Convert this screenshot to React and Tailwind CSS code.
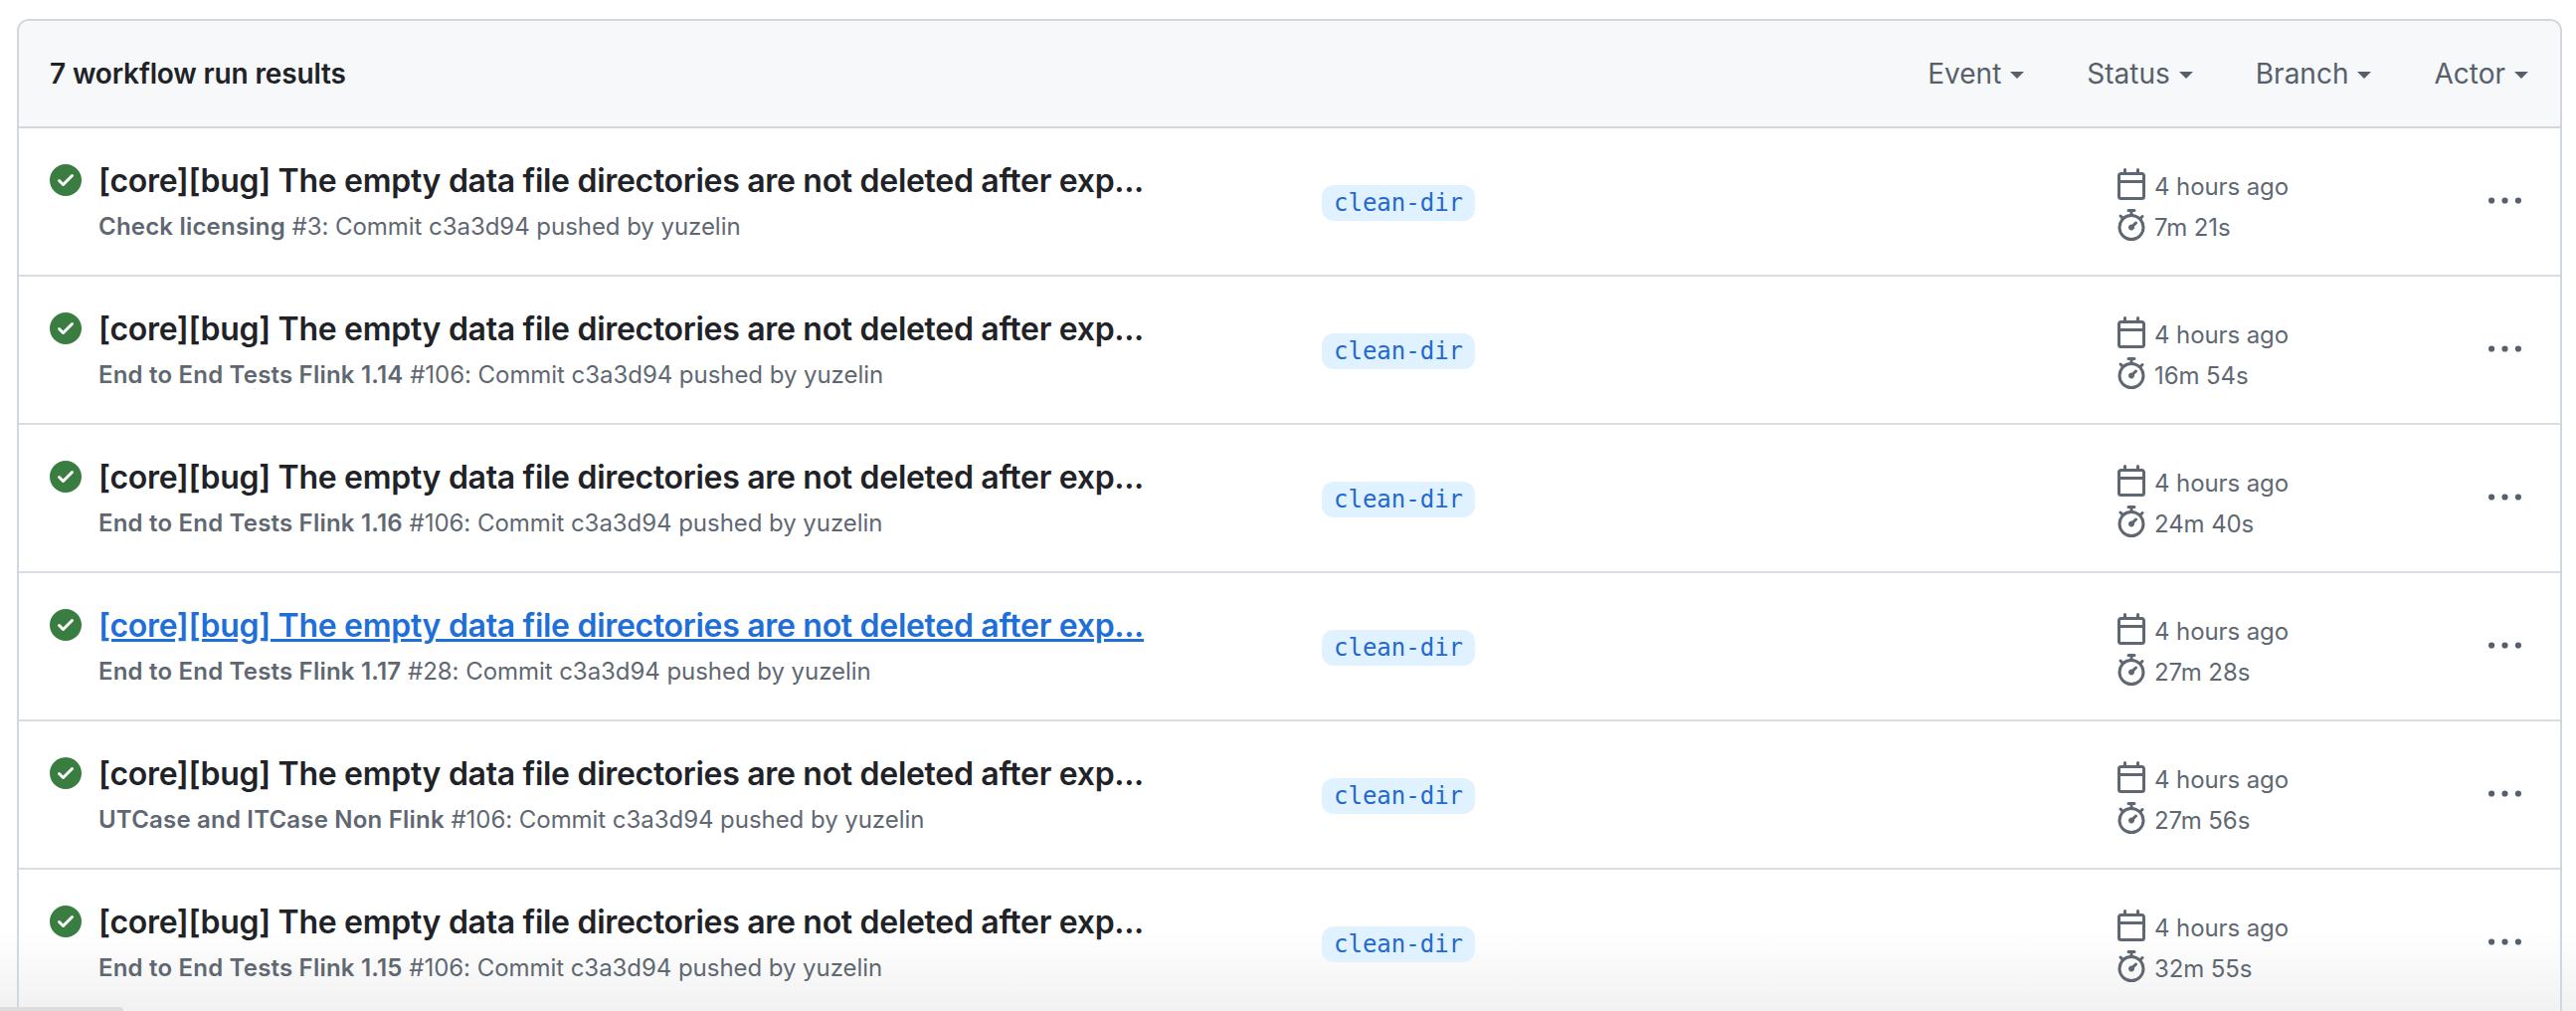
const CHECK = "M8 16A8 8 0 1 1 8 0a8 8 0 0 1 0 16Zm3.78-9.72a.751.751 0 0 0-.018-1.042.751.751 0 0 0-1.042-.018L6.75 9.19 5.28 7.72a.751.751 0 0 0-1.042.018.751.751 0 0 0-.018 1.042l2 2a.75.75 0 0 0 1.06 0Z";
const CAL = "M4.75 0a.75.75 0 0 1 .75.75V2h5V.75a.75.75 0 0 1 1.5 0V2h1.25c.966 0 1.75.784 1.75 1.75v10.5A1.75 1.75 0 0 1 13.25 16H2.75A1.75 1.75 0 0 1 1 14.25V3.75C1 2.784 1.784 2 2.75 2H4V.75A.75.75 0 0 1 4.75 0ZM2.5 7.5v6.75c0 .138.112.25.25.25h10.5a.25.25 0 0 0 .25-.25V7.5Zm10.75-4H2.75a.25.25 0 0 0-.25.25V6h11V3.75a.25.25 0 0 0-.25-.25Z";
const WATCH = "M5.75.75A.75.75 0 0 1 6.5 0h3a.75.75 0 0 1 0 1.5h-.75v1l-.001.041a6.724 6.724 0 0 1 3.464 1.435l.007-.006.75-.75a.749.749 0 0 1 1.275.326.749.749 0 0 1-.215.734l-.75.75-.006.007a6.75 6.75 0 1 1-10.548 0L2.72 4.781l-.75-.75a.751.751 0 0 1 .018-1.042.751.751 0 0 1 1.042-.018l.75.75.007.006A6.72 6.72 0 0 1 7.25 2.541V1.5H6.5a.75.75 0 0 1-.75-.75ZM8 14.5a5.25 5.25 0 1 0-.001-10.501A5.25 5.25 0 0 0 8 14.5Zm.389-6.7 1.33-1.33a.75.75 0 1 1 1.061 1.06L9.45 8.861A1.503 1.503 0 0 1 8 10.75a1.499 1.499 0 1 1 .389-2.95Z";
const KEBAB = "M8 9a1.5 1.5 0 1 0 0-3 1.5 1.5 0 0 0 0 3ZM1.5 9a1.5 1.5 0 1 0 0-3 1.5 1.5 0 0 0 0 3Zm13 0a1.5 1.5 0 1 0 0-3 1.5 1.5 0 0 0 0 3Z";

function Icon({ d, className }) {
  return (
    <svg viewBox="0 0 16 16" className={className} fill="currentColor">
      <path d={d} />
    </svg>
  );
}

const runs = [
  { name: "Check licensing", no: "#3", time: "7m 21s" },
  { name: "End to End Tests Flink 1.14", no: "#106", time: "16m 54s" },
  { name: "End to End Tests Flink 1.16", no: "#106", time: "24m 40s" },
  { name: "End to End Tests Flink 1.17", no: "#28", time: "27m 28s", hover: true },
  { name: "UTCase and ITCase Non Flink", no: "#106", time: "27m 56s" },
  { name: "End to End Tests Flink 1.15", no: "#106", time: "32m 55s" },
];

function Filter({ label, className }) {
  return (
    <div className={"flex items-center text-[#57606a] text-[28px] " + className}>
      <span>{label}</span>
      <span className="ml-[9px] mt-[2px] w-0 h-0 border-t-[7px] border-t-[#57606a] border-x-[7.5px] border-x-transparent"></span>
    </div>
  );
}

function Row({ run }) {
  return (
    <div className="flex h-[149px] shrink-0 border-b-2 border-[#d8dee4]">
      <div className="w-[1310px] shrink-0 pl-[31px] pt-[34px] flex items-start">
        <Icon d={CHECK} className="w-[32px] h-[32px] mt-[2px] text-[#3a7d40] shrink-0" />
        <div className="ml-[17px] min-w-0">
          <div className={"text-[32px] leading-[38px] font-semibold tracking-[-0.3px] whitespace-nowrap " + (run.hover ? "text-[#1f6fd8] underline" : "text-[#1f2328]")}>
            [core][bug] The empty data file directories are not deleted after exp...
          </div>
          <div className="mt-[11px] text-[24px] leading-[32px] text-[#5f6872] tracking-[-0.05px] whitespace-nowrap">
            <span className="font-semibold tracking-[0.2px]">{run.name}</span> {run.no}: Commit c3a3d94 pushed by yuzelin
          </div>
        </div>
      </div>
      <div className="w-[798px] shrink-0 pt-[2px] flex items-center">
        <span className="h-[36px] px-[12px] rounded-[12px] bg-[#e0f1ff] text-[#2369d0] text-[24px] leading-[36px] font-['DejaVu_Sans_Mono',monospace]">clean-dir</span>
      </div>
      <div className="w-[375px] shrink-0 pt-[37px] flex flex-col text-[#5f6872] text-[24px] leading-[32px] tracking-[-0.1px]">
        <div className="flex items-center">
          <Icon d={CAL} className="w-[32px] h-[32px] shrink-0" />
          <span className="ml-[7px] pt-[6px]">4 hours ago</span>
        </div>
        <div className="flex items-center mt-[3px]">
          <Icon d={WATCH} className="w-[32px] h-[32px] shrink-0" />
          <span className="ml-[7px] pt-[6px]">{run.time}</span>
        </div>
      </div>
      <div className="flex-1 flex items-center">
        <Icon d={KEBAB} className="w-[33px] h-[33px] text-[#57606a]" />
      </div>
    </div>
  );
}

export default function App() {
  return (
    <div className="relative h-[1016px] overflow-hidden bg-[linear-gradient(to_bottom,#ffffff_calc(100%-80px),#f1f1f1)] font-['Inter','Noto_Sans',sans-serif]">
      <div className="pt-[19px] pl-[17px] pr-[14px]">
        <div className="border-2 border-b-0 border-[#d0d7de] rounded-t-[12px] overflow-hidden">
          <div className="h-[108px] flex items-center bg-[#f6f8fa] border-b-2 border-[#d0d7de] pl-[31px]">
            <div className="text-[28px] font-semibold text-[#1f2328] tracking-[-0.15px]">7 workflow run results</div>
            <div className="ml-auto flex items-center">
              <Filter label="Event" className="mr-[63px]" />
              <Filter label="Status" className="mr-[63px]" />
              <Filter label="Branch" className="mr-[63px]" />
              <Filter label="Actor" className="mr-[32px]" />
            </div>
          </div>
          {runs.map((r) => (
            <Row key={r.name} run={r} />
          ))}
        </div>
      </div>
      <div className="absolute left-0 bottom-0 w-[124px] h-[4px] rounded-tr-[5px] bg-[#dcdcdc]"></div>
    </div>
  );
}
